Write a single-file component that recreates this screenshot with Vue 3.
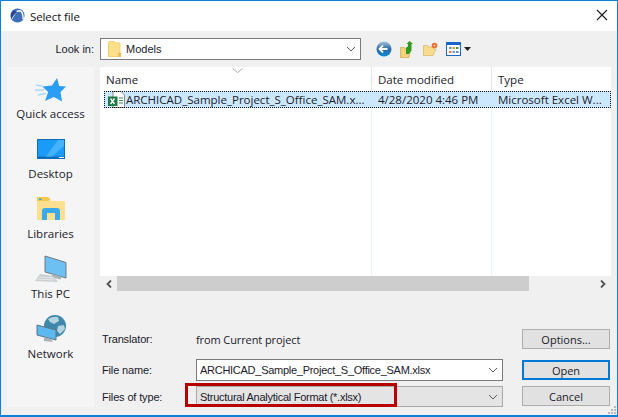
<script setup>
const places = [
  { id: 'star', label: 'Quick access' },
  { id: 'desktop', label: 'Desktop' },
  { id: 'libraries', label: 'Libraries' },
  { id: 'pc', label: 'This PC' },
  { id: 'network', label: 'Network' }
]
</script>

<template>
  <div class="window">
    <header class="titlebar">
      <svg class="logo" width="15" height="15" viewBox="0 0 16 16">
        <circle cx="8" cy="8" r="7.5" fill="#3f6fb8"/>
        <path d="M1 13C4 7 7 3 10 3c3 0 4 4 4 9" fill="none" stroke="#fff" stroke-width="1.5"/>
        <path d="M1 13C3 9 5 6 8 4.500L4 2.500 1 6z" fill="#27478c"/>
      </svg>
      <span class="title">Select file</span>
      <svg class="close" width="12" height="12" viewBox="0 0 12 12">
        <path d="M1 1l10 10M11 1L1 11" stroke="#1a1a1a" stroke-width="1.100" fill="none"/>
      </svg>
    </header>

    <div class="content">
      <div class="toolbar">
        <span class="lookin">Look in:</span>
        <div class="combo lookcombo">
          <svg width="13" height="16" viewBox="0 0 13 16">
            <path d="M.5 1.500Q.5.500 1.500.500h5l1 1.500h4.500v13.500H.5z" fill="#fde08a" stroke="#e8c868" stroke-width=".8"/>
            <rect x="10" y="12" width="3" height="4" fill="#e6c060"/>
          </svg>
          <span class="lookname">Models</span>
          <svg class="chev" width="10" height="6" viewBox="0 0 10 6"><path d="M1 1l4 4 4-4" fill="none" stroke="#5a5a5a"/></svg>
        </div>
        <div class="tools">
          <svg width="16" height="16" viewBox="0 0 16 16">
            <defs>
              <linearGradient id="bk" x1="0" y1="0" x2="0" y2="1">
                <stop offset="0" stop-color="#a9c3d8"/><stop offset=".5" stop-color="#2a6aa8"/><stop offset="1" stop-color="#0a8ad8"/>
              </linearGradient>
            </defs>
            <circle cx="8" cy="8" r="7.500" fill="url(#bk)"/>
            <path d="M3.500 8h8M7 4.500L3.500 8 7 11.500" fill="none" stroke="#fff" stroke-width="1.800"/>
          </svg>
          <svg class="up" width="14" height="17" viewBox="0 0 14 17">
            <path d="M.5 6.500h4l1 1.500h5l-1.500 8.500H.5z" fill="#f4d27a" stroke="#c8a850" stroke-width=".7"/>
            <path d="M6 13V7.500Q6 5.500 8 5.500V3H6.500L9.500 0 13 3h-1.500v6.500L9 13z" fill="#2f9a1e"/>
          </svg>
          <svg class="newf" width="15" height="14" viewBox="0 0 15 14">
            <path d="M.5 3.500h4l1 1.500h5v2h2.500l-3 6.500H.5z" fill="#f7dc8e" stroke="#d4b460" stroke-width=".7"/>
            <circle cx="11.500" cy="3.500" r="2.800" fill="#ee6a2c"/>
            <circle cx="11.500" cy="3.500" r="1" fill="#ffd9b0"/>
          </svg>
          <svg class="views" width="16" height="14" viewBox="0 0 16 14">
            <rect x=".5" y=".5" width="14" height="13" fill="#fff" stroke="#1a66c8"/>
            <rect x="1" y="1" width="13" height="2" fill="#1a66c8"/>
            <rect x="3" y="5" width="2.500" height="2" fill="#7088a8"/>
            <rect x="6.500" y="5" width="2.500" height="2" fill="#d8a040"/>
            <rect x="10" y="5" width="2.500" height="2" fill="#3f9a48"/>
            <rect x="3" y="9" width="2.500" height="2" fill="#e87848"/>
            <rect x="6.500" y="9" width="2.500" height="2" fill="#6aa0d8"/>
            <rect x="10" y="9" width="2.500" height="2" fill="#7088a8"/>
          </svg>
          <svg class="drop" width="7" height="4" viewBox="0 0 7 4"><path d="M0 0h7L3.500 4z" fill="#222"/></svg>
        </div>
      </div>

      <div class="main">
        <nav class="sidebar">
          <div v-for="p in places" :key="p.id" class="place">
            <div class="place-icon">
              <svg v-if="p.id === 'star'" width="32" height="26" viewBox="0 0 32 26">
                <path d="M22 2l2.200 8 6.800.5-5.500 5.500 1.500 9.500-8-4.500-9 4 3.200-9-6-5.500 9.800-1z" fill="#2a9df4"/>
                <path d="M1 9l8 1.500M0 14l9 0M3 19l8-1.500" stroke="#a8d8f8" stroke-width="1.500"/>
              </svg>
              <svg v-else-if="p.id === 'desktop'" width="28" height="20" viewBox="0 0 28 20">
                <rect width="28" height="20" fill="#0f6cb8"/>
                <rect x="1" y="1" width="26" height="16.500" fill="#1a9cf6"/>
                <path d="M9 17.500L21 1h6v6L15 17.500z" fill="#45b3fa"/>
                <rect x="22" y="18" width="5" height="1" fill="#fff"/>
              </svg>
              <svg v-else-if="p.id === 'libraries'" width="28" height="24" viewBox="0 0 28 24">
                <path d="M0 3q0-1.500 1.500-1.500h10L14 4h14v19H1.500Q0 23 0 21.500z" fill="#fde08f"/>
                <path d="M0 1q0-1 1-1h10l2.500 2L11 4H0z" fill="#f5c84c"/>
                <rect x="2" y="1.500" width="2.500" height="1.500" fill="#35a8ee"/>
                <path d="M5 23v-9q0-3 3-3h12q3 0 3 3v9h-5v-7h-8v7z" fill="#3aa9e8"/>
              </svg>
              <svg v-else-if="p.id === 'pc'" width="32" height="28" viewBox="0 0 32 28">
                <path d="M10 1l21 6.500V23L10 17z" fill="#6cc0f2" stroke="#6e7a84"/>
                <path d="M17 19l9 2.500v3l-9-2z" fill="#aab2b8"/>
                <path d="M5 19l13 2 5 6-23-1z" fill="#c9cdd0"/>
                <path d="M4 22l15 1M2 24l18 1" stroke="#eef0f2" stroke-width=".8"/>
              </svg>
              <svg v-else width="30" height="28" viewBox="0 0 30 28">
                <circle cx="19" cy="11" r="11" fill="#3f87ab"/>
                <path d="M12 4q5-3 10-2l1 4-5 3-4-2zM22 11l6-1 1 4-5 5-3-3z" fill="#b4d4e2"/>
                <path d="M1 10l19 5v10L1 20z" fill="#5cb9ef" stroke="#5e7482"/>
                <path d="M8 22l7 2 2 3-9-1z" fill="#aab2b8"/>
              </svg>
            </div>
            <span class="place-label">{{ p.label }}</span>
          </div>
        </nav>

        <div class="right">
          <section class="files">
            <div class="list">
              <svg class="sort" width="11" height="5" viewBox="0 0 11 5"><path d="M.5.500l5 4 5-4" fill="none" stroke="#a8a8a8"/></svg>
              <div class="head">
                <span class="c-name">Name</span>
                <span class="c-date">Date modified</span>
                <span class="c-type">Type</span>
              </div>
              <div class="row">
                <div class="c-name cell-name">
                  <svg class="xl" width="17" height="17" viewBox="0 0 17 17">
                    <path d="M5 .500h8l3.500 3.500v12.500H5z" fill="#fff" stroke="#8a8a8a"/>
                    <path d="M11 7h4M11 9.500h4M11 12h4" stroke="#3f8a5a"/>
                    <rect y="5.500" width="9.500" height="9.500" fill="#1f7a45"/>
                    <path d="M2.500 7.500l4 5.500M6.500 7.500l-4 5.500" stroke="#fff" stroke-width="1.300"/>
                  </svg>
                  <span class="fname">ARCHICAD_Sample_Project_S_Office_SAM.x...</span>
                </div>
                <span class="c-date">4/28/2020 4:46 PM</span>
                <span class="c-type">Microsoft Excel W...</span>
              </div>
              <div class="rule rule-a"></div>
              <div class="rule rule-b"></div>
            </div>
            <div class="hscroll">
              <span class="arrow"><svg width="6" height="8" viewBox="0 0 6 8"><path d="M5 .500L1.500 4 5 7.500" fill="none" stroke="#505050" stroke-width="1.800"/></svg></span>
              <div class="track"><div class="thumb"></div></div>
              <span class="arrow"><svg width="6" height="8" viewBox="0 0 6 8"><path d="M1 .500L4.500 4 1 7.500" fill="none" stroke="#505050" stroke-width="1.800"/></svg></span>
            </div>
          </section>

          <form class="form" @submit.prevent>
            <span class="lab">Translator:</span>
            <span class="val">from Current project</span>
            <span></span>
            <button type="button" class="btn">Options...</button>

            <span class="lab r2">File name:</span>
            <div class="combo field r2">
              <span>ARCHICAD_Sample_Project_S_Office_SAM.xlsx</span>
              <svg class="chev" width="10" height="6" viewBox="0 0 10 6"><path d="M1 1l4 4 4-4" fill="none" stroke="#5a5a5a"/></svg>
            </div>
            <span></span>
            <button type="button" class="btn primary r2">Open</button>

            <span class="lab">Files of type:</span>
            <div class="combo field disabled">
              <span>Structural Analytical Format (*.xlsx)</span>
              <svg class="chev" width="10" height="6" viewBox="0 0 10 6"><path d="M1 1l4 4 4-4" fill="none" stroke="#5a5a5a"/></svg>
              <div class="callout"></div>
            </div>
            <span></span>
            <button type="button" class="btn cancel">Cancel</button>
          </form>
        </div>
      </div>
    </div>

    <svg class="grip" width="10" height="10" viewBox="0 0 10 10" fill="#b8b8b8">
      <rect x="7" y="1" width="2" height="2"/><rect x="4" y="4" width="2" height="2"/><rect x="7" y="4" width="2" height="2"/>
      <rect x="1" y="7" width="2" height="2"/><rect x="4" y="7" width="2" height="2"/><rect x="7" y="7" width="2" height="2"/>
    </svg>
  </div>
</template>

<style>
html, body { margin: 0; background: #f0f0f0; }
</style>

<style scoped>
.window {
  position: relative;
  box-sizing: border-box;
  width: 618px;
  height: 417px;
  border: 1px solid #0f80d8;
  border-bottom-width: 2px;
  background: #f0f0f0;
  display: flex;
  flex-direction: column;
  overflow: hidden;
  font-family: "Open Sans", "Noto Sans", sans-serif;
  font-size: 11.5px;
  color: #1a1a2a;
}
.titlebar {
  height: 30px;
  flex: none;
  background: #fff;
  display: flex;
  align-items: center;
  padding: 0 9px 0 9px;
}
.logo { margin-right: 5px; margin-bottom: 1px; }
.title { font-size: 11.5px; letter-spacing: -.1px; color: #111; }
.close { margin-left: auto; margin-bottom: 2px; }
.content { flex: 1; display: flex; flex-direction: column; padding: 7px 6px 8px 6px; min-height: 0; }
.toolbar { display: flex; align-items: center; height: 22px; margin-bottom: 7px; }
.lookin { width: 93px; text-align: right; flex: none; padding-right: 6px; box-sizing: border-box; font-family: "Liberation Sans", sans-serif; font-size: 11px; margin-bottom: 1px; }
.combo {
  box-sizing: border-box;
  display: flex;
  align-items: center;
  background: #fff;
  border: 1px solid #7a7a7a;
  height: 22px;
}
.lookcombo { width: 261px; padding-left: 7px; font-family: "Liberation Sans", sans-serif; font-size: 11px; }
.lookname { margin-left: 5px; }
.chev { margin-left: auto; margin-right: 4px; flex: none; }
.tools { display: flex; align-items: center; margin-left: 15px; }
.up { margin-left: 8px; }
.newf { margin-left: 9px; }
.views { margin-left: 8px; }
.drop { margin-left: 2px; }

.main { flex: 1; display: flex; min-height: 0; }
.sidebar {
  width: 87px;
  flex: none;
  margin-right: 6px;
  background: #f5f5f5;
  display: flex;
  flex-direction: column;
  align-items: center;
  padding-top: 7px;
  box-sizing: border-box;
}
.place { height: 60px; flex: none; display: flex; flex-direction: column; align-items: center; justify-content: flex-start; width: 100%; }
.place-icon { display: flex; align-items: center; justify-content: center; height: 30px; }
.place-label { line-height: 16px; margin-top: 2px; white-space: nowrap; }

.right { flex: 1; display: flex; flex-direction: column; min-width: 0; }
.files { height: 224px; flex: none; display: flex; flex-direction: column; background: #fff; }
.list { flex: 1; position: relative; overflow: hidden; }
.sort { position: absolute; left: 132px; top: 1px; }
.head { display: flex; height: 24px; align-items: center; }
.c-name { width: 271px; flex: none; padding-left: 6px; box-sizing: border-box; }
.c-date { width: 120px; flex: none; padding-left: 7px; box-sizing: border-box; }
.c-type { flex: 1; padding-left: 7px; white-space: nowrap; }
.row {
  position: relative;
  z-index: 1;
  display: flex;
  align-items: center;
  height: 17px;
  margin-left: 4px;
  background: #cce8ff;
  box-sizing: border-box;
  outline: 1px dotted #111;
  outline-offset: -1px;
}
.row .c-name { width: 267px; padding-left: 4px; }
.cell-name { display: flex; align-items: center; white-space: nowrap; overflow: hidden; }
.xl { flex: none; margin-right: 1px; }
.rule { position: absolute; top: 0; bottom: 0; width: 1px; background: linear-gradient(#e5e5e5 24px, #eaf2fa 24px); }
.rule-a { left: 271px; }
.rule-b { left: 391px; }
.hscroll { height: 15px; flex: none; display: flex; background: #f0f0f0; }
.arrow { width: 17px; flex: none; display: flex; align-items: center; justify-content: center; }
.track { flex: 1; }
.thumb { width: 412px; height: 100%; background: #cdcdcd; }

.form {
  flex: 1;
  display: grid;
  grid-template-columns: 96px 307px 19px 88px;
  grid-template-rows: 20px 27px 21px;
  row-gap: 5px;
  align-items: center;
  padding-top: 38px;
  align-content: start;
  font-size: 11px;
}
.r2 { margin-top: 5px; }
.lab { padding-left: 2px; font-family: "Liberation Sans", sans-serif; letter-spacing: -.15px; }
.val { letter-spacing: -.1px; }
.field { padding-left: 3px; width: 307px; white-space: nowrap; font-family: "Liberation Sans", sans-serif; letter-spacing: -.27px; }
.field.disabled { height: 21px; background: #e4e4e4; border-color: #a8a8a8; position: relative; }
.callout {
  position: absolute;
  left: -12px;
  top: -4px;
  width: 212px;
  height: 24px;
  border: 3px solid #b80000;
  box-sizing: border-box;
  pointer-events: none;
}
.btn {
  box-sizing: border-box;
  width: 88px;
  height: 20px;
  padding: 0;
  background: #e1e1e1;
  border: 1px solid #adadad;
  font: inherit;
  color: #1a1a2a;
}
.btn.primary { border: 2px solid #0078d7; }
.btn.cancel { align-self: start; }
.grip { position: absolute; right: 0; bottom: 0; }
</style>
